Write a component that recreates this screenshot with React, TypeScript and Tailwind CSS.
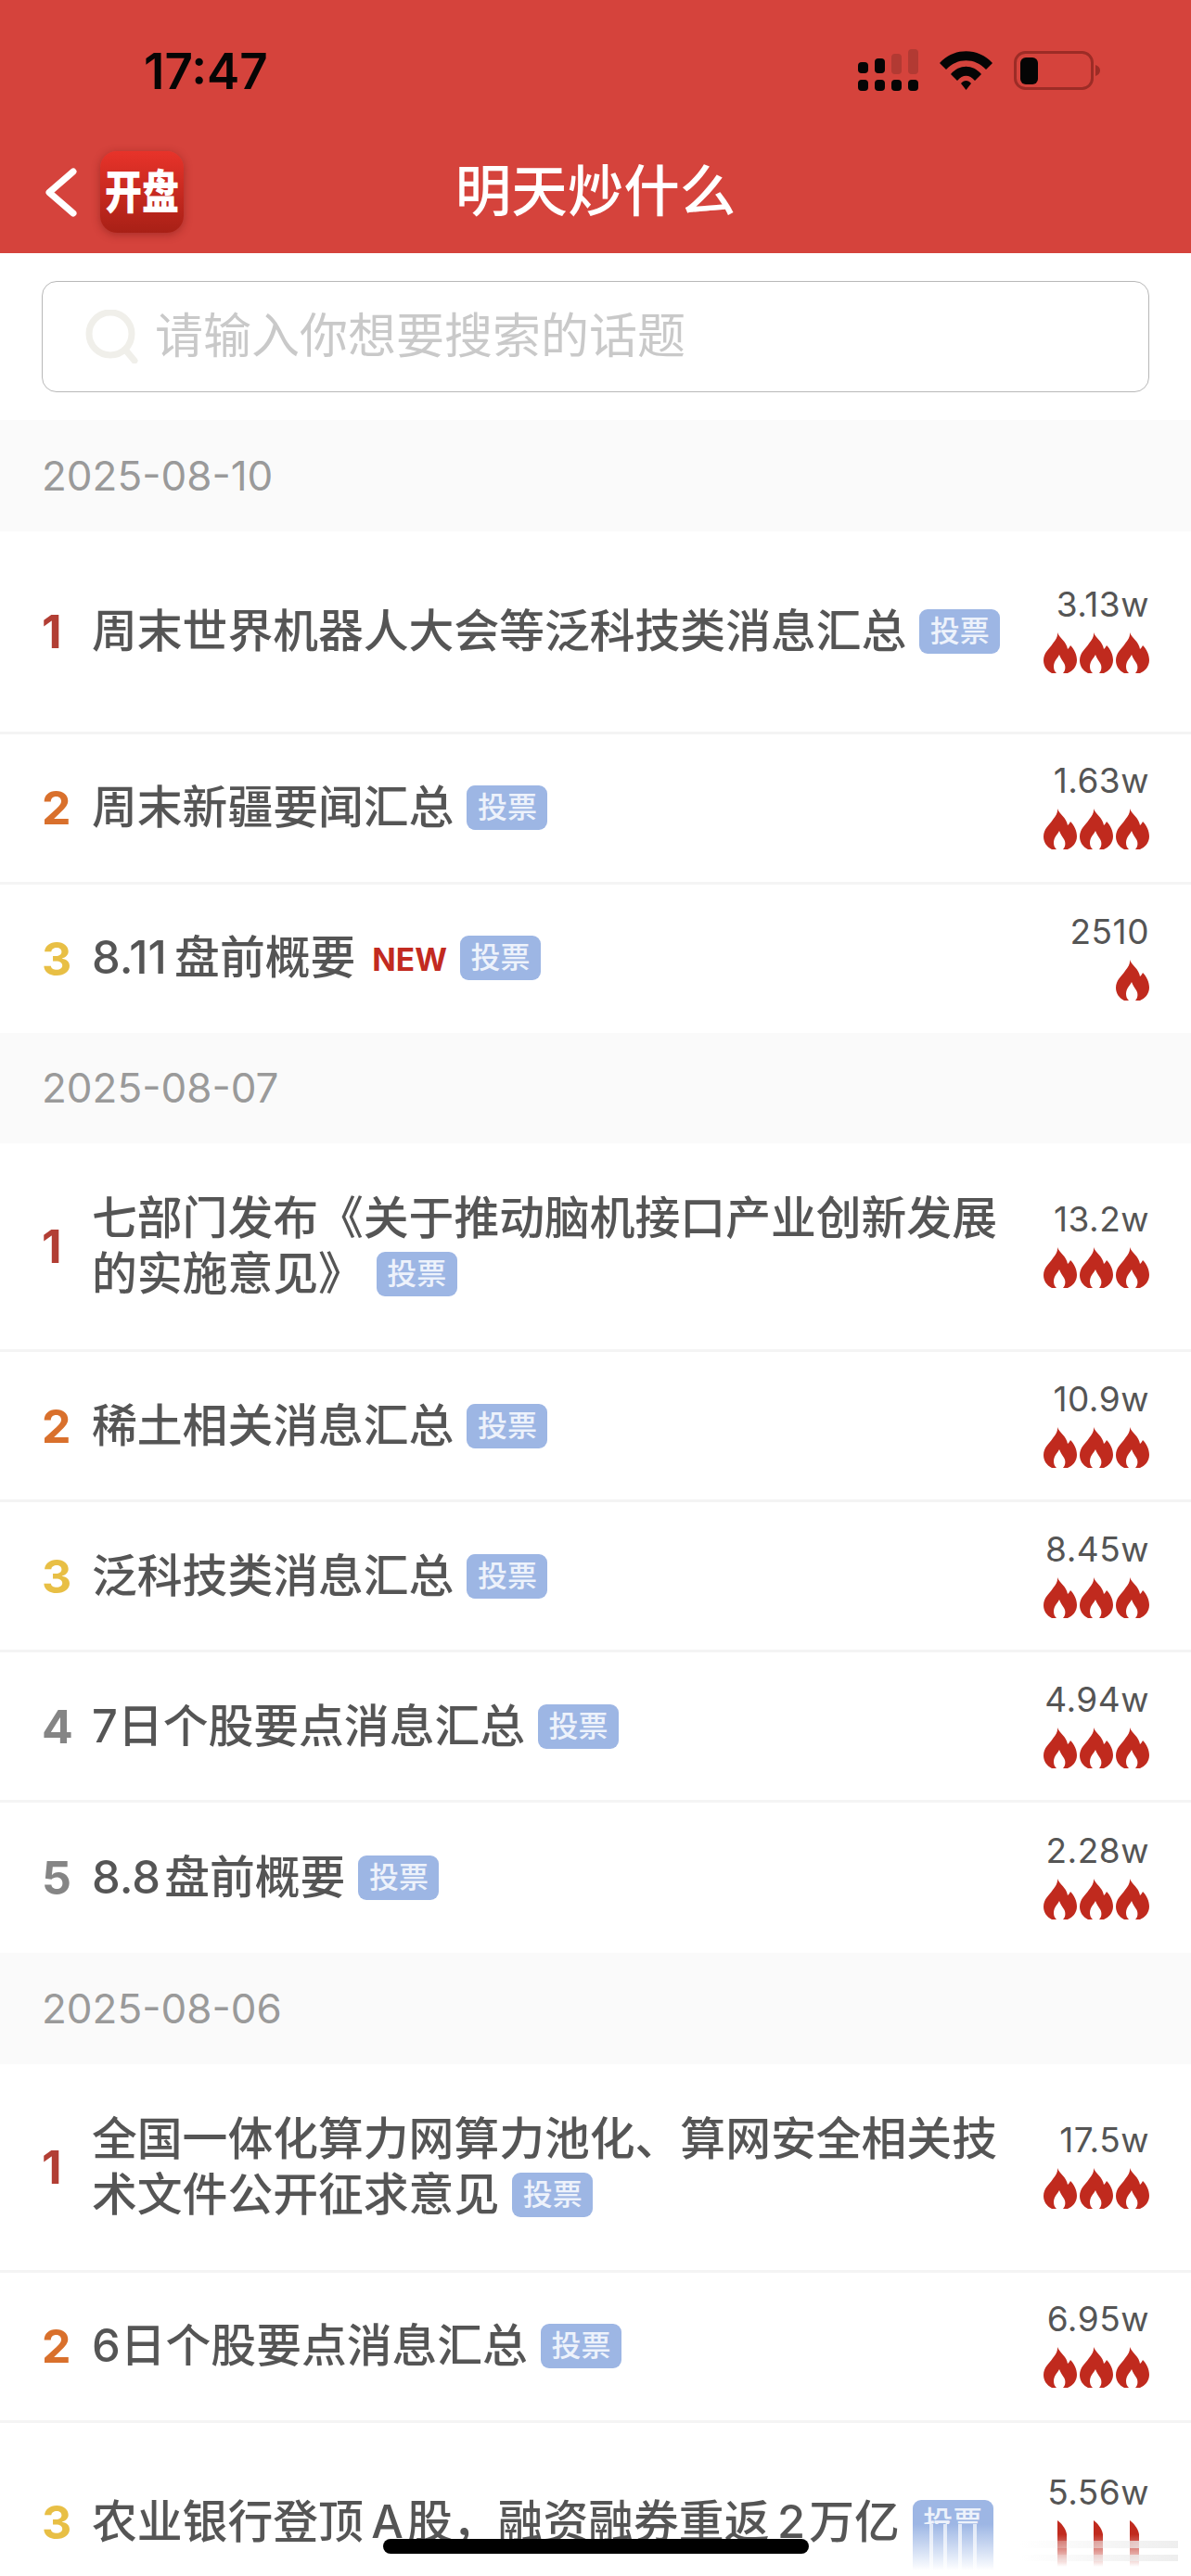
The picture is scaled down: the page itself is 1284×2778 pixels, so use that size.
interface Topic {
  title: string;
  value: string;
  flames: number;
  isNew?: boolean;
  height: string;
  cut?: boolean;
}

interface Section {
  date: string;
  topics: Topic[];
}

const sections: Section[] = [
  {
    date: "2025-08-10",
    topics: [
      { title: "周末世界机器人大会等泛科技类消息汇总", value: "3.13w", flames: 3, height: "h-[219px]" },
      { title: "周末新疆要闻汇总", value: "1.63w", flames: 3, height: "h-[162px]" },
      { title: "8.11\u2009盘前概要", value: "2510", flames: 1, isNew: true, height: "h-[160px]" },
    ],
  },
  {
    date: "2025-08-07",
    topics: [
      { title: "七部门发布《关于推动脑机接口产业创新发展的实施意见》", value: "13.2w", flames: 3, height: "h-[225px]" },
      { title: "稀土相关消息汇总", value: "10.9w", flames: 3, height: "h-[162px]" },
      { title: "泛科技类消息汇总", value: "8.45w", flames: 3, height: "h-[162px]" },
      { title: "7日个股要点消息汇总", value: "4.94w", flames: 3, height: "h-[162px]" },
      { title: "8.8\u200a盘前概要", value: "2.28w", flames: 3, height: "h-[162px]" },
    ],
  },
  {
    date: "2025-08-06",
    topics: [
      { title: "全国一体化算力网算力池化、算网安全相关技术文件公开征求意见", value: "17.5w", flames: 3, height: "h-[225px]" },
      { title: "6日个股要点消息汇总", value: "6.95w", flames: 3, height: "h-[162px]" },
      { title: "农业银行登顶\u2009A\u200a股，融资融券重返\u20092\u200a万亿", value: "5.56w", flames: 3, height: "h-[218px]", cut: true },
    ],
  },
];

const rankColors = ["text-[#b23e34]", "text-[#d9702c]", "text-[#e8bf45]", "text-[#858585]", "text-[#858585]"];

function SignalIcon() {
  return (
    <svg width="65" height="45" viewBox="0 0 65 45">
      <rect x="0" y="14" width="11" height="12" rx="4" fill="#050505" />
      <rect x="18" y="10" width="11" height="16" rx="4" fill="#050505" />
      <rect x="36" y="5" width="11" height="22" rx="4" fill="#b23a33" />
      <rect x="54" y="0" width="11" height="27" rx="4" fill="#b23a33" />
      <rect x="0" y="33" width="11" height="12" rx="4" fill="#050505" />
      <rect x="18" y="33" width="11" height="12" rx="4" fill="#050505" />
      <rect x="36" y="33" width="11" height="12" rx="4" fill="#050505" />
      <rect x="54" y="33" width="11" height="12" rx="4" fill="#050505" />
    </svg>
  );
}

function WifiIcon() {
  return (
    <svg width="57" height="42" viewBox="0 0 57 42" fill="#050505">
      <path d="M0 13C15 -4 42 -4 57 13L50 20C38 7 19 7 7 20Z" />
      <path d="M12 25C21 14 36 14 45 25L38 32C32 25 25 25 19 32Z" />
      <path d="M23 35C26 31 31 31 34 35L28.5 42Z" />
    </svg>
  );
}

function BatteryIcon() {
  return (
    <svg width="93" height="42" viewBox="0 0 93 42">
      <rect x="1.5" y="1.5" width="83" height="39" rx="11" fill="none" stroke="#9c2c26" strokeWidth="3" />
      <rect x="7" y="7" width="19" height="29" rx="6" fill="#050505" />
      <path d="M88 15C91 16 93 18 93 21C93 24 91 26 88 27Z" fill="#9c2c26" />
    </svg>
  );
}

function Flame() {
  return (
    <svg width="36" height="44" viewBox="0 0 36 44" fill="#c02a1e">
      <path d="M15 0C17 6 25 10 26 18C27 17 28.5 15.5 29 14C33 18 36 24 36 30C36 37 31 42 26 44L21 44C24 41 24 36 22 33C20 30 18 27 17 24C15 28 11 31 11 37C11 40 12 42 14 44L9 44C3 41 0 36 0 30C0 22 6 18 10 12C13 8 15.5 5 15 0Z" />
    </svg>
  );
}

// the long-screenshot stitch smears the last row's flames into spikes
function FlameSpike({ id }: { id: string }) {
  return (
    <svg width="36" height="50" viewBox="0 0 36 50">
      <defs>
        <linearGradient id={id} x1="0" y1="0" x2="0" y2="1">
          <stop offset="0.3" stopColor="#c02a1e" />
          <stop offset="1" stopColor="#ffffff" />
        </linearGradient>
      </defs>
      <path d="M15 0C18 2 24 8 25 15L25 50L15 50Z" fill={`url(#${id})`} />
    </svg>
  );
}

function VoteBadge({ cut }: { cut?: boolean }) {
  return (
    <span className="relative ml-[14px] inline-flex h-[48px] w-[87px] items-center justify-center rounded-[9px] bg-[#9db6e4] align-[6px] text-[32px] leading-none text-[#edf2fb]">
      投票
      {cut && (
        <span className="absolute inset-x-0 top-[26px] flex h-[50px] justify-around bg-gradient-to-b from-[#9db6e4] to-white px-[12px]">
          <span className="h-full w-[4px] bg-gradient-to-b from-[#dfe7f6] to-white" />
          <span className="h-full w-[4px] bg-gradient-to-b from-[#dfe7f6] to-white" />
          <span className="h-full w-[4px] bg-gradient-to-b from-[#dfe7f6] to-white" />
          <span className="h-full w-[4px] bg-gradient-to-b from-[#dfe7f6] to-white" />
        </span>
      )}
    </span>
  );
}

function TopicRow({ topic, rank, last }: { topic: Topic; rank: number; last: boolean }) {
  return (
    <div className={`flex items-center pl-[45px] pr-[45px] ${topic.height} ${last ? "" : "border-b-[3px] border-[#f4f4f4]"}`}>
      <div className={`w-[54px] shrink-0 text-[50px] font-bold leading-none ${rankColors[rank]}`}>
        {rank + 1}
      </div>
      <div className="w-[983px] shrink-0 text-[48.8px] font-medium leading-[60px] text-[#555555]">
        {topic.title}
        {topic.isNew && (
          <span className="ml-[18px] align-[3px] text-[33.5px] font-bold text-[#c22a20]">NEW</span>
        )}
        <VoteBadge cut={topic.cut} />
      </div>
      <div className="-mt-[6px] flex flex-1 flex-col items-end gap-[8px]">
        <div className="whitespace-nowrap text-[37px] leading-[44px] tracking-[0.5px] text-[#555555]">{topic.value}</div>
        <div className="flex gap-[3px]">
          {Array.from({ length: topic.flames }).map((_, i) =>
            topic.cut ? <FlameSpike key={i} id={`spike-${i}`} /> : <Flame key={i} />
          )}
        </div>
      </div>
    </div>
  );
}

export default function App() {
  return (
    <div className="relative h-[2778px] w-[1284px] overflow-hidden bg-white font-['Inter','Noto_Sans_CJK_SC',sans-serif]">
      <header className="h-[273px] bg-[#d5433c]">
        <div className="flex h-[163px] items-start justify-between pl-[155px] pr-[98px] pt-[53px]">
          <div className="text-[53px] font-semibold leading-[48px] text-[#050505]">17:47</div>
          <div className="flex items-center gap-[23px]">
            <SignalIcon />
            <WifiIcon />
            <BatteryIcon />
          </div>
        </div>
        <div className="grid grid-cols-[1fr_auto_1fr] items-center pl-[48px]">
          <div className="flex items-center gap-[25px]">
            <svg width="35" height="53" viewBox="0 0 35 53" fill="none">
              <path d="M31 4L5 26.5L31 49" stroke="#ffffff" strokeWidth="7" strokeLinecap="round" strokeLinejoin="round" />
            </svg>
            <div className="flex h-[88px] w-[90px] items-center justify-center rounded-[18px] bg-gradient-to-b from-[#e8332a] to-[#a82016] text-[40px] font-black leading-none text-white shadow-[0_2px_10px_rgba(110,20,15,0.45)]">
              <span className="scale-y-125">开盘</span>
            </div>
          </div>
          <div className="-mt-[3px] pr-[48px] text-[60.5px] font-medium leading-[70px] text-white">明天炒什么</div>
          <div />
        </div>
      </header>

      <div className="px-[45px] py-[30px]">
        <div className="flex h-[120px] items-center gap-[17px] rounded-[16px] border border-[#b8b8b8] pl-[46px]">
          <svg width="58" height="58" viewBox="0 0 58 58" fill="none" stroke="#f0efea" strokeWidth="7" strokeLinecap="round">
            <circle cx="27" cy="26" r="23" />
            <path d="M43 43L53 55" />
          </svg>
          <span className="text-[52px] leading-none text-[#c9c9c9]">请输入你想要搜索的话题</span>
        </div>
      </div>

      {sections.map((section) => (
        <section key={section.date}>
          <div className="flex h-[119.5px] items-center bg-[#fafafa] pl-[45px] text-[44px] text-[#9a9a9a]">
            {section.date}
          </div>
          {section.topics.map((topic, i) => (
            <TopicRow key={topic.title} topic={topic} rank={i} last={i === section.topics.length - 1 && !topic.cut} />
          ))}
        </section>
      ))}

      {/* stitch smudges at the bottom right */}
      <div className="absolute bottom-[30px] right-[14px] h-[8px] w-[170px] bg-gradient-to-r from-transparent to-[#eeeeee]" />
      <div className="absolute bottom-[16px] right-[14px] h-[7px] w-[170px] bg-gradient-to-r from-transparent to-[#eeeeee]" />

      {/* home indicator */}
      <div className="absolute bottom-[24px] left-[413px] h-[16px] w-[459px] rounded-full bg-black" />
    </div>
  );
}
